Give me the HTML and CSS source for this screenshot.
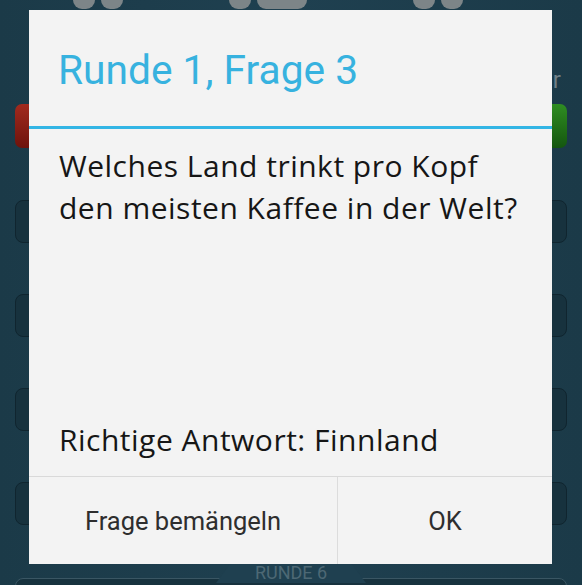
FILE: index.html
```html
<!DOCTYPE html>
<html lang="de">
<head>
    <meta charset="UTF-8">
    <meta name="viewport" content="width=device-width, initial-scale=1.0">
    <title>Runde 1, Frage 3</title>
    <link rel="stylesheet" href="styles.css">
</head>
<body>
    <div class="screen">
        <!-- Spielfeld im Hintergrund -->
        <div class="game">
            <div class="scores">
                <span class="blob"></span><span class="blob"></span>
                <span class="blob blob-gap"></span><span class="blob blob-wide"></span>
                <span class="blob blob-gap"></span><span class="blob"></span>
                <span class="player-name">r</span>
            </div>
            <div class="players">
                <div class="player player-red"></div>
                <div class="player player-green"></div>
            </div>
            <div class="answers">
                <div class="answer"></div>
                <div class="answer"></div>
                <div class="answer"></div>
                <div class="answer"></div>
            </div>
            <div class="rounds">
                <div class="round-tab">RUNDE 6</div>
            </div>
        </div>

        <div class="dialog">
            <div class="dialog-title">Runde 1, Frage 3</div>
            <div class="dialog-body">
                <p>Welches Land trinkt pro Kopf den meisten Kaffee in der Welt?</p>
                <p>Richtige Antwort: Finnland</p>
            </div>
            <div class="dialog-buttons">
                <button type="button" class="btn btn-report">Frage bemängeln</button>
                <button type="button" class="btn">OK</button>
            </div>
        </div>
    </div>
</body>
</html>
```

FILE: styles.css
```css
body {
    margin: 0;
    background-color: #1c3c4a;
    font-family: Roboto, "Liberation Sans", sans-serif;
}
.screen {
    position: relative;
    width: 582px;
    height: 585px;
    overflow: hidden;
    background: linear-gradient(90deg, #1b3a48 0%, #1f4050 50%, #1b3a48 100%);
}

/* Hintergrund */
.game {
    display: flex;
    flex-direction: column;
    padding: 0 15px;
}
.scores {
    height: 104px;
    display: flex;
    gap: 6px;
    padding-left: 58px;
    position: relative;
}
.blob {
    width: 22px;
    height: 9px;
    border-radius: 0 0 11px 11px;
    background-color: #7d8588;
}
.blob-gap {
    margin-left: 100px;
}
.blob-wide {
    width: 50px;
}
.player-name {
    position: absolute;
    right: 6px;
    top: 66px;
    color: #6f7f86;
    font-size: 24px;
}
.players {
    height: 44px;
    display: flex;
    justify-content: space-between;
}
.player {
    width: 60px;
    border-radius: 7px;
}
.player-red {
    background: linear-gradient(180deg, #a22a1e, #6e130c);
}
.player-green {
    background: linear-gradient(180deg, #2f8d22, #14560f);
}
.answers {
    display: flex;
    flex-direction: column;
    gap: 51px;
    margin-top: 52px;
}
.answer {
    height: 43px;
    border-radius: 8px;
    background-color: #17323e;
    border: 1px solid #10252f;
    box-sizing: border-box;
}
.rounds {
    position: relative;
    margin-top: 53px;
    height: 40px;
    border-radius: 8px;
    background-color: #17323e;
    border: 1px solid #3a5663;
}
.round-tab {
    position: absolute;
    left: 50%;
    top: -16px;
    transform: translateX(-50%);
    width: 150px;
    height: 20px;
    line-height: 20px;
    text-align: center;
    font-size: 18px;
    color: #4d6874;
    background-color: #1f4050;
    clip-path: polygon(10% 0, 90% 0, 100% 100%, 0 100%);
}

/* Dialog */
.dialog {
    position: absolute;
    left: 29px;
    top: 10px;
    width: 523px;
    height: 554px;
    background-color: #f3f3f3;
    display: flex;
    flex-direction: column;
}
.dialog-title {
    height: 112px;
    padding: 4px 29px 0;
    display: flex;
    align-items: center;
    font-size: 40.7px;
    color: #37b2df;
    border-bottom: 3px solid #33b5e5;
}
.dialog-body {
    flex: 1;
    display: flex;
    flex-direction: column;
    justify-content: space-between;
    padding: 16px 30px 15px;
    color: #161616;
    font-family: "Open Sans", sans-serif;
    font-size: 30px;
    letter-spacing: 0.5px;
    line-height: 42px;
}
.dialog-body p {
    margin: 0;
}
.dialog-buttons {
    display: flex;
    height: 87px;
    border-top: 1px solid #d9d9d9;
}
.btn {
    flex: 1;
    border: none;
    background: none;
    font-family: inherit;
    font-size: 25.5px;
    color: #2e2e2e;
    padding: 0;
}
.btn-report {
    flex: 0 0 309px;
    border-right: 1px solid #dcdcdc;
}
```
